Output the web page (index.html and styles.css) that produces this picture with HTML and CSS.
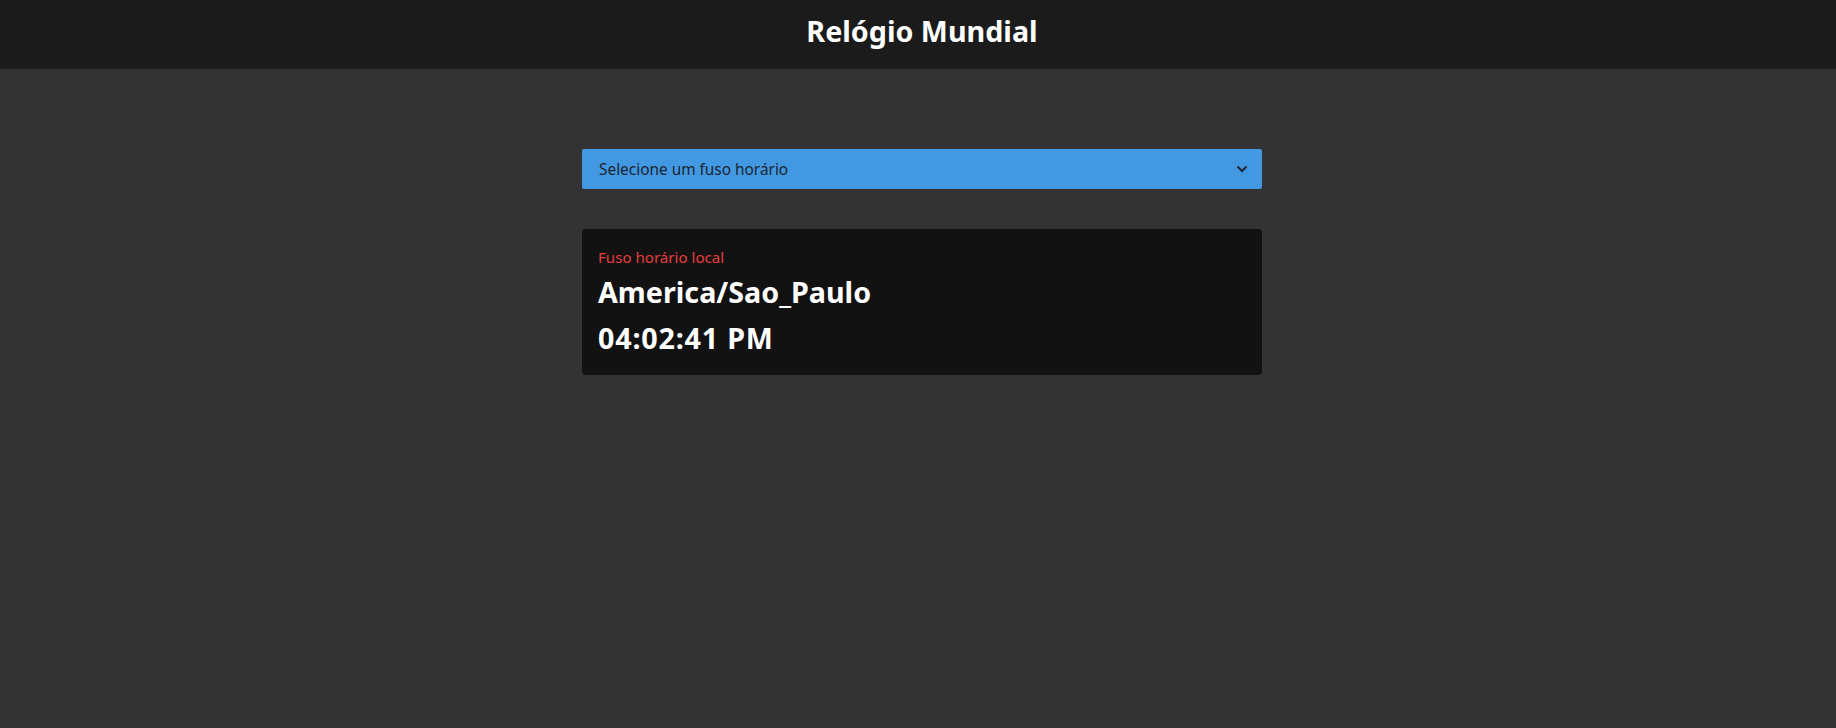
FILE: index.html
```html
<!DOCTYPE html>
<html lang="pt">
<head>
<meta charset="utf-8">
<title>Relógio Mundial</title>
<link rel="stylesheet" href="styles.css">
</head>
<body>
<header class="topbar">
  <h1 class="title">Relógio Mundial</h1>
</header>
<main class="main">
  <div class="container">
    <div class="select-wrap">
      <select class="select">
        <option>Selecione um fuso horário</option>
      </select>
      <svg class="chevron" width="12" height="8" viewBox="0 0 12 8"><path d="M1.5 1.5 L6 6 L10.5 1.5" fill="none" stroke="#1a2433" stroke-width="2"/></svg>
    </div>
    <div class="card">
      <div class="label">Fuso horário local</div>
      <div class="zone">America/Sao_Paulo</div>
      <div class="time">04:02:41 PM</div>
    </div>
  </div>
</main>
</body>
</html>
```
FILE: styles.css
```css
html, body {
  margin: 0;
  padding: 0;
  background: #333333;
  font-family: "Noto Sans", "Open Sans", sans-serif;
  color: #ffffff;
}
.topbar {
  background: #1b1b1b;
  height: 69px;
  display: flex;
  align-items: center;
  justify-content: center;
  padding: 0 0 6px 8px;
  box-sizing: border-box;
}
.title {
  margin: 0;
  font-size: 28.7px;
  font-weight: 700;
  line-height: 1;
}
.main {
  padding: 80px 0 0 8px;
  display: flex;
  justify-content: center;
}
.container {
  width: 680px;
  display: flex;
  flex-direction: column;
  gap: 40px;
}
.select-wrap {
  position: relative;
  height: 40px;
}
.select {
  appearance: none;
  -webkit-appearance: none;
  width: 100%;
  height: 40px;
  border: none;
  border-radius: 2px;
  background: #4299e1;
  color: #1a2433;
  font-family: inherit;
  font-size: 15.4px;
  padding: 0 16px 0 17px;
  outline: none;
}
.chevron {
  position: absolute;
  right: 14px;
  top: 16px;
  pointer-events: none;
}
.card {
  background: #121212;
  border-radius: 4px;
  height: 146px;
  box-sizing: border-box;
  padding: 18px 16px 0 16px;
}
.label {
  color: #e53e3e;
  font-size: 15.1px;
  line-height: 20px;
}
.zone, .time {
  font-size: 28.7px;
  font-weight: 700;
  line-height: 46px;
}
.zone {
  margin-top: 2px;
}
.time {
  letter-spacing: 0.8px;
}
```
